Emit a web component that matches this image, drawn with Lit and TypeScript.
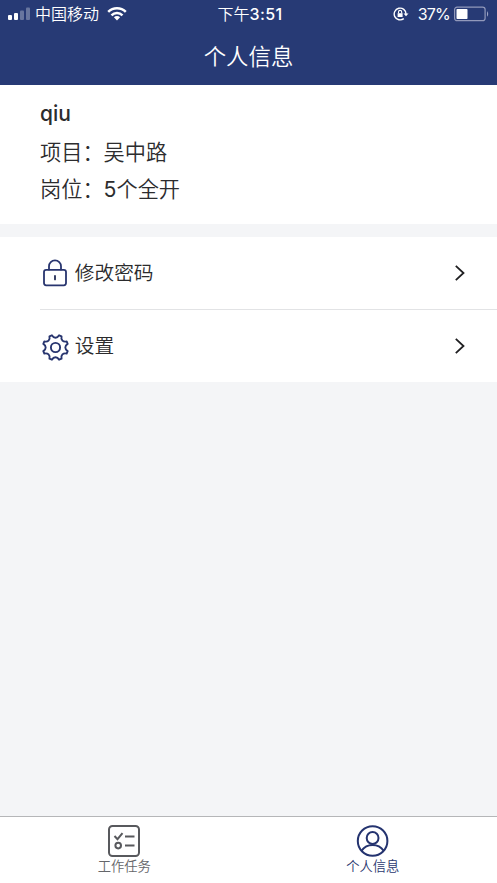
import { LitElement, html, css, svg } from "lit";
import { customElement, property } from "lit/decorators.js";

/** Outline of an eight-toothed cog centred on the origin. */
function cogPath(): string {
  const at = (deg: number, r: number) => {
    const a = (deg * Math.PI) / 180;
    return `${(Math.sin(a) * r).toFixed(2)} ${(-Math.cos(a) * r).toFixed(2)}`;
  };
  let d = `M${at(-16.5, 12.7)}`;
  for (let k = 0; k < 8; k++) {
    const c = k * 45;
    d += `C${at(c - 11, 9.2)} ${at(c + 11, 9.2)} ${at(c + 16.5, 12.7)}`;
    d += `L${at(c + 28.5, 12.7)}`;
  }
  return d + "Z";
}

const icons = {
  lock: svg`<svg width="28" height="30" viewBox="0 0 28 30" fill="none" stroke="#28356f" stroke-width="1.8" stroke-linecap="round">
    <rect x="3" y="11.9" width="22" height="15.4" rx="2.2"/>
    <path d="M8 11.5V8.2a6 5.9 0 0 1 12 0v3.3"/><path d="M14 18v3.4" stroke="#222c55"/></svg>`,
  gear: svg`<svg width="28" height="30" viewBox="-14.5 -16.5 28 30" fill="none" stroke="#28356f" stroke-width="1.9" stroke-linejoin="round">
    <path d=${cogPath()}/><circle r="4.6"/></svg>`,
  tasks: svg`<svg width="34" height="34" viewBox="0 0 34 34" fill="none" stroke="#58595d" stroke-width="2">
    <rect x="2" y="2" width="30" height="30" rx="3.5"/>
    <path d="M7.5 12l3 3.2 5-6M18 12.5h9.5M18 21.6h9.5"/><circle cx="11.2" cy="21.6" r="2.8"/></svg>`,
  person: svg`<svg width="34" height="34" viewBox="0 0 34 34" fill="none" stroke="#24336f" stroke-width="2">
    <circle cx="16.6" cy="17" r="14.8"/><circle cx="16.6" cy="14" r="5.9"/>
    <path d="M5.6 26.6C8.2 22.8 12.1 20.9 16.6 20.9s8.4 1.9 11 5.7"/></svg>`,
};

@customElement("status-bar")
class StatusBar extends LitElement {
  static styles = css`
    :host { display: grid; grid-template-columns: 1fr auto 1fr; align-items: center; height: 28px; font-size: 16px; line-height: 28px; padding: 0 8px; }
    .side { display: flex; align-items: center; height: 28px; }
    .wifi { margin-left: 8px; }
    .carrier { margin-left: 5px; }
    .right { justify-content: flex-end; }
    .time { padding-left: 3px; }
    .clock { font-weight: 500; letter-spacing: .4px; }
    .pct { margin: 0 4px 0 9px; font-weight: 400; letter-spacing: -.8px; }
  `;
  render() {
    return html`
      <div class="side">
        <svg width="22" height="14" viewBox="0 0 22 14" fill="#fff">
          <rect x="0" y="8" width="4" height="5" rx="1"/><rect x="6" y="6" width="4" height="7" rx="1"/>
          <g opacity=".3"><rect x="12" y="3.5" width="4" height="9.5" rx="1"/><rect x="18" y=".5" width="4" height="12.5" rx="1"/></g>
        </svg>
        <span class="carrier">中国移动</span>
        <svg class="wifi" width="20" height="14" viewBox="0 0 20 14" fill="none" stroke="#fff" stroke-width="2.5">
          <path d="M1.2 4.9a12.5 12.5 0 0 1 17.6 0M4.5 8.3a7.8 7.8 0 0 1 11 0"/>
          <path d="M6.9 10.3a4.4 4.4 0 0 1 6.2 0L10 13.4z" fill="#fff" stroke="none"/>
        </svg>
      </div>
      <span class="time">下午<span class="clock">3:51</span></span>
      <div class="side right">
        <svg width="16" height="14" viewBox="0 0 16 14" fill="none" stroke="#fff" stroke-width="1.4">
          <path d="M10.8 11.6A5.9 5.9 0 1 1 13 7"/>
          <path d="M10.5 6.5h5L13 9.3z" fill="#fff" stroke="none"/>
          <rect x="4.6" y="6.2" width="5" height="3.8" fill="#fff" stroke="none"/><path d="M5.5 6.3V5a1.6 1.6 0 0 1 3.2 0v1.3" stroke-width="1.1"/>
        </svg>
        <span class="pct">37%</span>
        <svg width="35" height="16" viewBox="0 0 35 16">
          <rect x=".6" y="1.1" width="30.5" height="13.6" rx="2.5" fill="none" stroke="#9299bb" stroke-width="1.2"/>
          <rect x="2.5" y="3" width="11" height="10" rx=".8" fill="#fff"/>
          <path d="M33 5q2.4 2.9 0 5.8z" fill="#9da4c4"/>
        </svg>
      </div>`;
  }
}

@customElement("menu-row")
class MenuRow extends LitElement {
  @property() label = "";
  @property() icon: "lock" | "gear" = "lock";
  static styles = css`
    :host { display: flex; align-items: center; height: 72px; margin-left: 40px; padding: 0 31px 0 1px; font-size: 19.7px; color: #2b2b2d; }
    .icon { display: block; height: 30px; }
    .label { flex: 1; margin-left: 5.8px; line-height: 30px; }
    .arrow { display: block; }
  `;
  render() {
    return html`<span class="icon">${icons[this.icon]}</span><span class="label">${this.label}</span>
      <svg class="arrow" width="12" height="18" viewBox="0 0 12 18" fill="none" stroke="#1f1f21" stroke-width="1.8"><path d="M1.8 1.8 9.5 9 1.8 16.2"/></svg>`;
  }
}

@customElement("tab-item")
class TabItem extends LitElement {
  @property() label = "";
  @property() icon: "tasks" | "person" = "tasks";
  @property({ type: Boolean, reflect: true }) active = false;
  static styles = css`
    :host { flex: 1; display: flex; flex-direction: column; align-items: center; padding-top: 7px; color: #65666a; }
    :host([active]) { color: #2a3870; }
    .icon { height: 34px; }
    .label { font-size: 13.3px; line-height: 16px; }
  `;
  render() {
    return html`<span class="icon">${icons[this.icon]}</span><span class="label">${this.label}</span>`;
  }
}

@customElement("app-root")
class AppRoot extends LitElement {
  static styles = css`
    :host { display: flex; flex-direction: column; height: 100vh; background: #f4f5f7; font-family: Inter, "Noto Sans CJK SC", sans-serif; font-weight: 350; overflow: hidden; }
    .header { height: 85px; flex: none; background: #273a75; color: #fff; }
    .title { font-size: 22.4px; line-height: 57px; text-align: center; }
    .profile { box-sizing: border-box; height: 139px; flex: none; background: #fff; padding: 10px 40px 0; color: #2c2c2e; font-size: 21.2px; }
    .name { font-size: 21px; font-weight: 500; line-height: 38px; }
    .line { line-height: 37px; }
    .line:nth-child(2) { line-height: 38px; }
    .digit { font-weight: 400; }
    .menu { margin-top: 13px; background: #fff; }
    .rule { height: 1px; margin-left: 40px; background: #e2e3e5; }
    .space { flex: 1; }
    .tabs { display: flex; box-sizing: border-box; height: 67px; flex: none; background: #fff; border-top: 1px solid #b5b6b8; }
  `;
  render() {
    return html`
      <div class="header"><status-bar></status-bar><div class="title">个人信息</div></div>
      <div class="profile">
        <div class="name">qiu</div>
        <div class="line">项目：吴中路</div>
        <div class="line">岗位：<span class="digit">5</span>个全开</div>
      </div>
      <div class="menu">
        <menu-row icon="lock" label="修改密码"></menu-row>
        <div class="rule"></div>
        <menu-row icon="gear" label="设置"></menu-row>
      </div>
      <div class="space"></div>
      <div class="tabs">
        <tab-item icon="tasks" label="工作任务"></tab-item>
        <tab-item icon="person" label="个人信息" active></tab-item>
      </div>`;
  }
}
